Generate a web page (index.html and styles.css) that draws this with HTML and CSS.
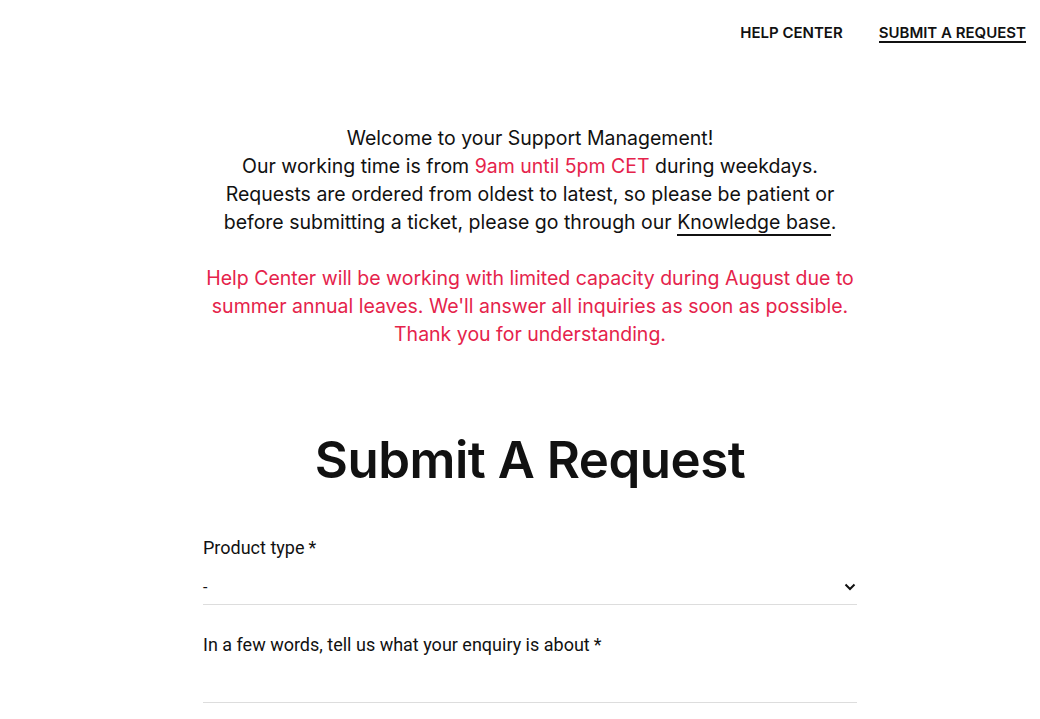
FILE: index.html
```html
<!DOCTYPE html>
<html lang="en">
<head>
  <meta charset="UTF-8">
  <meta name="viewport" content="width=device-width, initial-scale=1.0">
  <title>Submit A Request</title>
  <link rel="stylesheet" href="styles.css">
</head>
<body>
  <header class="topbar">
    <nav class="nav">
      <a href="#" class="nav-link">HELP CENTER</a>
      <a href="#" class="nav-link active">SUBMIT A REQUEST</a>
    </nav>
  </header>

  <main class="page">
    <div class="notice">
      <p>
        Welcome to your Support Management!<br>
        Our working time is from <span class="accent">9am until 5pm CET</span> during weekdays.<br>
        Requests are ordered from oldest to latest, so please be patient or<br>
        before submitting a ticket, please go through our <a href="#" class="kb-link">Knowledge base</a>.
      </p>
      <p class="accent">
        Help Center will be working with limited capacity during August due to<br>
        summer annual leaves. We'll answer all inquiries as soon as possible.<br>
        Thank you for understanding.
      </p>
    </div>

    <h1 class="title">Submit A Request</h1>

    <form class="request-form">
      <div class="field">
        <label class="label">Product type<span class="req">*</span></label>
        <div class="select">
          <span>-</span>
          <svg class="chevron" width="12" height="8" viewBox="0 0 12 8"><path d="M1.5 1.5 6 6l4.5-4.5" fill="none" stroke="#111" stroke-width="2"/></svg>
        </div>
      </div>
      <div class="field">
        <label class="label">In a few words, tell us what your enquiry is about<span class="req">*</span></label>
        <div class="input"></div>
      </div>
    </form>
  </main>
</body>
</html>
```

FILE: styles.css
```css
body {
  margin: 0;
  font-family: Inter, "Noto Sans", sans-serif;
  color: #111;
  background: #fff;
}
a {
  color: inherit;
  text-decoration: none;
}
.topbar {
  display: flex;
  justify-content: flex-end;
  padding: 24px 14px 0 0;
}
.nav {
  display: flex;
  gap: 36px;
}
.nav-link {
  font-size: 15px;
  font-weight: 600;
  line-height: 17px;
  border-bottom: 2px solid transparent;
}
.nav-link.active {
  border-bottom-color: #111;
}
.page {
  width: 654px;
  margin: 0 auto;
  padding-left: 20px;
}
.notice {
  margin-top: 81px;
  text-align: center;
  font-size: 19.5px;
  line-height: 28px;
}
.notice p {
  margin: 0 0 28px;
}
.accent {
  color: #e5234b;
}
.kb-link {
  border-bottom: 2px solid #111;
}
.title {
  margin: 82px 0 0;
  text-align: center;
  font-size: 51px;
  font-weight: 600;
  line-height: 60px;
  letter-spacing: -0.5px;
}
.request-form {
  margin-top: 45px;
}
.field {
  margin-bottom: 27px;
}
.label {
  display: block;
  font-family: Roboto, sans-serif;
  font-size: 18px;
  line-height: 26px;
  color: #111;
}
.req {
  margin-left: 4px;
}
.select {
  display: flex;
  justify-content: space-between;
  align-items: center;
  margin-top: 13px;
  height: 26px;
  padding: 0 0 4px 0;
  border-bottom: 1px solid #ddd;
  font-family: Roboto, sans-serif;
  font-size: 16px;
}
.chevron {
  margin-right: 1px;
}
.input {
  height: 44px;
  border-bottom: 1px solid #ddd;
}
```
